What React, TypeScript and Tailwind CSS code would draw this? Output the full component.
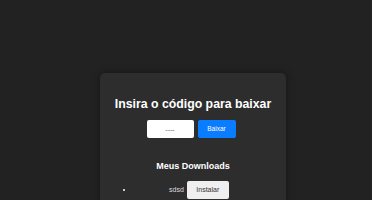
import React from "react";

export default function App() {
  return (
    <div className="w-[372px] h-[200px] overflow-hidden bg-[#222222]" style={{ fontFamily: '"Liberation Sans", Arial, sans-serif' }}>
      <div className="pt-[73px] flex justify-center">
        <div className="ml-[14px] w-[186px] h-[160px] rounded-[5px] bg-[#2d2d2d] shadow-[0_0_8px_rgba(0,0,0,0.4)] pt-[24px] flex flex-col items-center">
          <h2 className="text-[12.3px] leading-[14px] font-bold text-white">Insira o código para baixar</h2>
          <div className="mt-[9px] mr-[4px] flex gap-[4px]">
            <input
              className="w-[47px] h-[18px] rounded-[2px] bg-white text-center text-[7px] text-[#333] outline-none placeholder:text-[#666]"
              placeholder="----"
            />
            <button className="w-[38px] h-[18px] rounded-[2px] bg-[#0a7cff] text-white text-[6.5px]">Baixar</button>
          </div>
          <h3 className="mt-[23px] text-[9px] leading-[10px] font-bold text-white">Meus Downloads</h3>
          <div className="mt-[10px] w-full flex items-center">
            <span className="ml-[23px] w-[2px] h-[2px] rounded-full bg-white"></span>
            <span className="ml-[44px] text-[7px] text-[#ddd]">sdsd</span>
            <button className="ml-[3px] w-[42px] h-[18px] rounded-[2px] bg-[#efefef] text-[#333] text-[7px]">Instalar</button>
          </div>
        </div>
      </div>
    </div>
  );
}
